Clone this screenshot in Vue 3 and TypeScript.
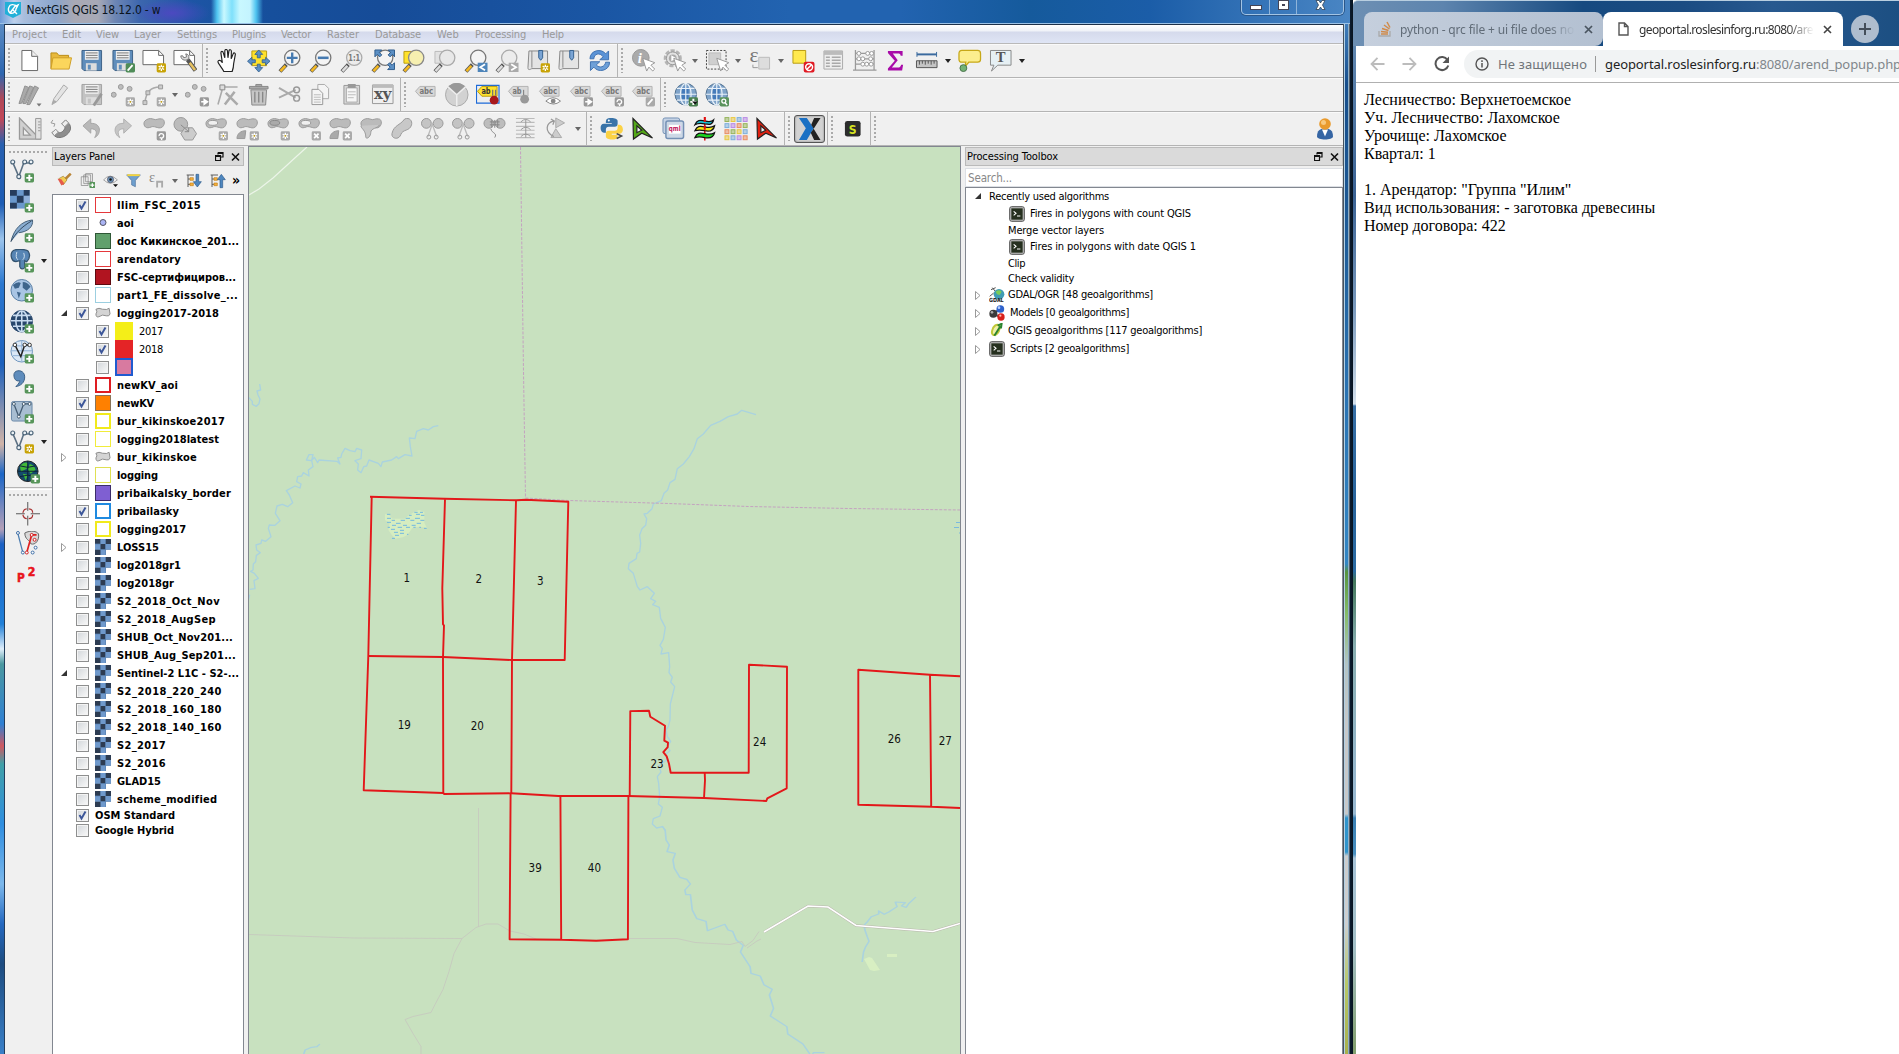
<script setup lang="ts">
interface Item { icon?: string; arrow?: 'on' | 'off' }
interface Layer { name: string; w: number; sym: string; on?: boolean; exp?: 'open' | 'closed'; sub?: boolean; short?: boolean; noSym?: boolean }

const vFit = {
  mounted(el: HTMLElement, binding: { value: number }) {
    const natural = el.getBoundingClientRect().width
    const count = (el.textContent || '').trim().length
    if (count && binding.value) el.style.letterSpacing = (binding.value - natural) / count + 'px'
  },
}

const badge = (fill: string, inner: string) => `<rect x="15" y="14.500" width="9.500" height="9.500" rx="1.500" fill="${fill}"/>${inner}`
const star = '<path d="M19.750 16v6.500M17 17.500l5.500 3.500M17 21l5.500-3.500" stroke="#fff" stroke-width="1.300"/><circle cx="19.750" cy="19.250" r="1" fill="#b8940a"/>'
const plus = '<path d="M19.750 16.200v6.200M16.600 19.250h6.200" stroke="#fff" stroke-width="2"/>'
const cross = '<path d="M17.500 17l4.500 4.500M22 17l-4.500 4.500" stroke="#fff" stroke-width="1.800"/>'
const right = '<path d="M16.500 19.200h3v-2.400l3.600 2.400-3.600 2.600v-2.600" stroke="#fff" stroke-width="1.400" fill="#fff"/>'
const rot = '<path d="M17.500 19.500a2.300 2.300 0 1 1 2.500 2v2M20 21.500l-2-.5" stroke="#fff" stroke-width="1.400" fill="none"/>'
const pen = '<path d="M17 22l5-5.500" stroke="#fff" stroke-width="1.800"/>'
const goldStar = badge('#c8a306', star)
const grayStar = badge('#aaa', star)
const greenPlus = badge('#57955a', plus)
const lens = (rim: string, glass: string, handle: string) =>
  `<path d="M2 23L8.500 16" stroke="#555" stroke-width="4"/><path d="M2.500 22.500L7.500 17.200" stroke="${handle}" stroke-width="2.600"/><circle cx="14.500" cy="9" r="7.800" fill="${glass}" stroke="${rim}" stroke-width="1.300"/>`
const yl = lens('#777', '#f4f4f4', '#f5b921')
const gl = lens('#aaa', '#ececec', '#ddd')
const blob = 'M3 4C1 6 2 11 6 11c3 0 4-2 7-1 4 1 5 2 8 0 3-3 2-8-1-8-4-1-5 2-9 0C8 1 5 2 3 4Z'
const gb = (extra = '') => `<path d="${blob}" fill="#bbb" stroke="#9b9b9b"/>${extra}`
const tag = (t: string, bg = '#d9d9d9', st = '#b2b2b2', fg = '#777') =>
  `<path d="M1.500 8.500L6 3.500h15.500v10H6Z" fill="${bg}" stroke="${st}"/><text x="5.500" y="11.500" font-size="8.500" font-weight="700" font-family="DejaVu Sans" textLength="${t.length * 4.7}" lengthAdjust="spacingAndGlyphs" fill="${fg}">${t}</text>`
const floppy = (c: string, e: string) =>
  `<path d="M2 1.500h20v20.500H4L2 20Z" fill="${c}" stroke="${e}"/><path d="M5 2h14v9H5z" fill="#f2f2f2"/><path d="M6 4h12M6 6.500h12M6 9h12" stroke="#777"/><path d="M6 14.500h11V22H6z" fill="#ddd"/><path d="M8 16h3v5H8z" fill="${c}"/>`
const cut = '<path d="M12 6l-5 14M11 6l5 14" stroke="#bbb" stroke-width="1.400"/><circle cx="8" cy="20.500" r="2" fill="none" stroke="#999"/><circle cx="15.500" cy="20.500" r="2" fill="none" stroke="#999"/>'
const globe = '<circle cx="12" cy="11.500" r="11" fill="#7fa3c9" stroke="#50708e"/><path d="M8 4h7v13H8z" fill="#2c6ab4" opacity=".7"/><path d="M12 .5v22M1 11.500h22M3 5.500h18M3 17.500h18" stroke="#eaf2fa" stroke-width="1.200"/><ellipse cx="12" cy="11.500" rx="5.500" ry="11" fill="none" stroke="#eaf2fa" stroke-width="1.200"/>'
const vline = '<path d="M3 4l6 14L14 4h7" fill="none" stroke="#5c7184" stroke-width="1.600"/><g fill="#eef4f8" stroke="#4b6478" stroke-width="1.200"><circle cx="2.800" cy="3" r="2"/><circle cx="9" cy="18" r="2"/><circle cx="15" cy="3" r="2"/><circle cx="21.500" cy="3" r="2"/></g>'
const dots = '<g fill="#bdbdbd" stroke="#999"><circle cx="2.800" cy="12" r="2.500"/><circle cx="10" cy="4" r="2.500"/><circle cx="19" cy="6" r="2.500"/></g>'
const cursor = '<path d="M12 9.500l4 13 2.300-4 3.900 4 2-2-3.900-4 4-2.500Z" fill="#fff" stroke="#999"/>'
const north = (c: string) => `<path d="M2 1.500L22 21.500l-11-5-8.500 6ZM6 9v7l5-2.500Z" fill="${c}" fill-rule="evenodd" stroke="#222" stroke-width="1.200"/>`
const grid = ['#96b45a', '#e8c840', '#7caedb', '#b98ae6', '#ea8c60']
const cells = Array.from({ length: 16 }, (_, i) => {
  const c = grid[((i % 4) + Math.floor(i / 4) * 2) % 5]
  return `<rect x="${1 + (i % 4) * 6.200}" y="${0.6 + Math.floor(i / 4) * 6.200}" width="4" height="4" fill="${c}" fill-opacity=".5" stroke="${c}"/>`
}).join('')

const icons: Record<string, string> = {
  new: '<path d="M4 1.500h10l6 6V22H4Z" fill="#fff" stroke="#666"/><path d="M14 1.500v6h6" fill="#eee" stroke="#666"/>',
  open: '<path d="M2 20V4h6l2 2.500h10V9" fill="#e8b93c" stroke="#b98c18"/><path d="M2 20.500L4 9h19l-2.500 11.500Z" fill="#fbd65c" stroke="#cf9f27"/>',
  save: floppy('#5f8dbb', '#3d6288'),
  saveas: floppy('#5f8dbb', '#3d6288') + badge('#4f8c58', pen),
  composer: '<path d="M1 1.500h16l5 5V16H1Z" fill="#fff" stroke="#666"/><path d="M17 1.500v5h5" fill="none" stroke="#666"/>' + goldStar,
  manager: '<path d="M1 1.500h16l5 5V16H1Z" fill="#fff" stroke="#666"/><path d="M17 1.500v5h5" fill="none" stroke="#666"/><path d="M8 7c0 4 4 5 6 4l2-1c1-3-1-5-3-5l1 3-3 1-1-2Z" fill="#ddd" stroke="#777"/><path d="M15 11l8 11" stroke="#555" stroke-width="4.500"/><path d="M17 14l5.500 7.500" stroke="#e6c160" stroke-width="2.600"/>',
  pan: '<path d="M8 23c-1-3-6-8-6-10s3-2 4.500 1L5 4c0-2 2-2 2.500 0L9 9V2c0-2 2.500-2 2.700 0l.5 7 1-7c.3-2 2.500-1.500 2.500.3L15.500 10l2-5c.7-1.700 2.500-1 2.200.8L18 15c0 3-.5 5-1.500 8Z" fill="#fff" stroke="#222" stroke-width="1.200"/>',
  pansel: '<path d="M5 2h15v15H5z" fill="#ffe22b" stroke="#b99c10"/><g fill="#5b8fc4" stroke="#2f5c8c" stroke-width=".8"><path d="M12 1l4 4.500h-2.500V9h-3V5.500H8ZM12 23.500l4-4.500h-2.500v-3.500h-3V19H8ZM.500 12.500L5 8.500V11h3.500v3H5v2.500ZM23.500 12.500L19 8.500V11h-3.500v3H19v2.500Z"/></g>',
  zin: yl + '<path d="M14.500 3.500v11M9 9h11" stroke="#467ab0" stroke-width="2.400"/>',
  zout: yl + '<path d="M9 9h11" stroke="#467ab0" stroke-width="2.600"/>',
  z11: gl + '<text x="8.500" y="12.500" font-size="9" font-weight="700" font-family="DejaVu Sans" textLength="12" lengthAdjust="spacingAndGlyphs" fill="#777">1:1</text>',
  zfull: yl + '<g fill="#5b8fc4" stroke="#2f5c8c"><path d="M4 1h7L8.500 3.500 11 6 9 8 6.500 5.500 4 8ZM24 1h-6.500L20 3.500 17.500 6l2 2L22 5.500 24 8ZM24 21h-7l2.500-2.500L17 16l2-2 2.500 2.500L24 14Z"/></g>',
  zsel: '<path d="M2 2.500h14v12H2z" fill="#ffe22b" stroke="#b99c10"/>' + lens('#888', '#f6efb0', '#f5b921'),
  zlayer: '<path d="M2 2.500h11v12H2z" fill="#e2e2e2" stroke="#bbb"/>' + lens('#aaa', '#e8e8e8', '#ddd'),
  zlast: yl + '<path d="M14 14h10v9.500H14z" fill="#4e85ba"/><path d="M21.500 15.500L16.500 18.700l5 3" stroke="#fff" stroke-width="1.800" fill="none"/>',
  znext: gl + '<path d="M14 14h10v9.500H14z" fill="#aaa"/><path d="M16.500 15.500l5 3.200-5 3" stroke="#fff" stroke-width="1.800" fill="none"/>',
  bmnew: '<path d="M3 2h19v18H6c-2 1-4 2-4-1Z" fill="#e4e4e4" stroke="#888"/><path d="M6 2v17" stroke="#888"/><path d="M13 1.500h4V9l-2 2.500L13 9Z" fill="#7aa4d4" stroke="#33608e"/>' + goldStar,
  bm: '<path d="M3 2h19v18H6c-2 1-4 2-4-1Z" fill="#e4e4e4" stroke="#888"/><path d="M6 2v17" stroke="#888"/><path d="M13 1.500h4V9l-2 2.500L13 9Z" fill="#7aa4d4" stroke="#33608e"/>',
  refresh: '<path d="M2 10C2 1 14-1 18 5l3-3v9h-9l3.500-3C12 3 6 5 6 10Z" fill="#5b93d6" stroke="#3f72b0"/><path d="M22 13.500c0 9-12 11-16 5L2.500 22v-9h9.500l-3.500 3.200c3 4 9 2 9.500-2.700Z" fill="#6ea0d8" stroke="#3f72b0"/>',
  info: '<circle cx="10" cy="9" r="8.500" fill="#aaa" stroke="#999"/><text x="7" y="14.500" font-size="15" font-style="italic" font-weight="700" font-family="Liberation Serif" fill="#fff">i</text>' + cursor,
  action: '<circle cx="11" cy="9.500" r="7.500" fill="#ddd" stroke="#b4b4b4" stroke-width="3.500" stroke-dasharray="4 1.500"/><circle cx="11" cy="9.500" r="6.500" fill="#e2e2e2" stroke="#999"/><circle cx="11" cy="9.500" r="4" fill="#aaa"/><path d="M9.500 6.500l5 3-5 3Z" fill="#fff"/>' + cursor,
  select: '<path d="M4 4h12v12H4z" fill="#cfcfcf" stroke="#bbb"/><path d="M1.500 1.500h20v19h-20z" fill="none" stroke="#444" stroke-dasharray="2 1.500"/>' + cursor,
  expr: '<path d="M11 8.500h11v12H11z" fill="#ddd" stroke="#bbb"/><text x="1.500" y="13.500" font-size="22" font-family="Liberation Serif" fill="#777">ε</text><path d="M5 16v3h5" stroke="#999" fill="none"/>',
  desel: '<path d="M2 1.500h13v13H2z" fill="#ffe94e" stroke="#b99c10"/><rect x="13" y="13" width="11" height="11" rx="2" fill="#e01b24"/><circle cx="18.500" cy="18.500" r="3.500" fill="none" stroke="#fff" stroke-width="1.500"/><path d="M16 21l5-5" stroke="#fff" stroke-width="1.500"/>',
  table: '<path d="M2 2h19v18.500H2z" fill="#eee" stroke="#aaa"/><path d="M2 2h19v4H2z" fill="#bbb"/><path d="M4 8.500h4M10 8.500h9M4 11.500h4M10 11.500h9M4 14.500h4M10 14.500h9M4 17.500h4M10 17.500h9" stroke="#aaa" stroke-width="1.500"/>',
  calc: '<path d="M2.500 1v20M21.500 1v20M0 21.500h24M2.500 4.500h19M2.500 10h19M2.500 15.500h19" stroke="#999" stroke-width="1.300"/><g fill="#fff" stroke="#999"><circle cx="6" cy="4.500" r="2"/><circle cx="15" cy="4.500" r="2"/><circle cx="19" cy="4.500" r="2"/><circle cx="6" cy="10" r="2"/><circle cx="10" cy="10" r="2"/><circle cx="18" cy="10" r="2"/><circle cx="10" cy="15.500" r="2"/><circle cx="14" cy="15.500" r="2"/><circle cx="18.500" cy="15.500" r="2"/></g>',
  sigma: '<path d="M4 2h15v5h-2c0-2-1-2.500-3-2.500H9l5 7-6 7.500h6c2 0 3-1 3.500-3h2L18.500 22H4v-2l7-8L4 4Z" fill="#a80ca8"/>',
  measure: '<path d="M2 5.500h20" stroke="#3b6a9e" stroke-width="2"/><path d="M2 3v5M22 3v5" stroke="#3b6a9e"/><path d="M1.500 12h21v7h-21z" fill="#c4c4c4" stroke="#555"/><path d="M4.500 12v4M7.500 12v3M10.500 12v4M13.500 12v3M16.500 12v4M19.500 12v3" stroke="#555"/>',
  tip: '<path d="M4 1.500h16q3 0 3 3v6q0 3-3 3H11L7 18l1-4.500H4q-3 0-3-3v-6q0-3 3-3Z" fill="#fcee8e" stroke="#c7a818" stroke-width="1.300"/><circle cx="5.500" cy="19.500" r="3.500" fill="#74b274" stroke="#47724a"/>',
  text: '<path d="M1.500 1.500h21v15H9l-6.500 6L5 16.500H1.500Z" fill="#e6f0f4" stroke="#888"/><text x="7" y="13.500" font-size="15" font-weight="700" font-family="Liberation Serif" fill="#555">T</text>',
  pencils: '<g stroke="#909090" fill="#aaa"><path d="M1 21L7 3l4 1.500-7 16ZM5 21l7-18 4 1.500L8 21ZM9 22l8-19 4 2-9 17Z"/></g><path d="M19 21h5l-2.500 3Z" fill="#777"/>',
  pencil: '<path d="M3 22l2-6L15 2l4 3L8 19Z" fill="#e4e4e4" stroke="#aaa"/><path d="M3 22l1.500-5 3.500 2Z" fill="#aaa"/>',
  gsave: floppy('#c3c3c3', '#a3a3a3') + '<path d="M14 23l8-12" stroke="#999" stroke-width="3"/>',
  addpt: dots + grayStar,
  curve: '<path d="M3 20C4 9 9 4 18 4" fill="none" stroke="#aaa" stroke-width="1.600"/><g fill="#ccc" stroke="#999"><path d="M1 18h4v4H1zM4 8h4v4H4zM17 2h4v4h-4z"/></g>' + grayStar,
  movept: dots + badge('#999', right),
  node: '<path d="M6 4v4L2 22M8 4h14" stroke="#aaa" stroke-width="1.600" fill="none"/><path d="M4 2h5v5H4z" fill="#ddd" stroke="#888"/><path d="M9 22L19 9M10 10l12 12" stroke="#aaa" stroke-width="2.600"/>',
  trash: '<path d="M4 7h16l-1 15.500H5Z" fill="#c6c6c6" stroke="#888"/><path d="M8 9v11M12 9v11M16 9v11" stroke="#888" stroke-width="1.400"/><path d="M2.500 3.500h19v2.500h-19zM9 3.500V1.500h6v2" fill="#aaa" stroke="#888"/>',
  scissors: '<path d="M1 5l17 10M1 15l17-8" stroke="#aaa" stroke-width="2"/><circle cx="19" cy="7" r="3" fill="none" stroke="#999" stroke-width="1.500"/><circle cx="19" cy="15.500" r="3" fill="none" stroke="#999" stroke-width="1.500"/>',
  copy: '<path d="M9 1.500h7l4 4V16H9Z" fill="#f4f4f4" stroke="#aaa"/><path d="M3 6.500h7l4 4V22H3Z" fill="#f4f4f4" stroke="#999"/><path d="M5 12h7M5 14.500h7M5 17h7M5 19.500h7" stroke="#bbb"/>',
  paste: '<path d="M4 2.500h16v19H4z" fill="#d8d8d8" stroke="#999"/><path d="M6.500 5h11v14.500h-11z" fill="#f6f6f6" stroke="#aaa"/><path d="M8 1h8v4H8z" fill="#999"/><path d="M8 9h8M8 12h8M8 15h6" stroke="#bbb"/>',
  xy: '<path d="M1.500 2h21v19h-21z" fill="#efefef" stroke="#999"/><path d="M1.500 2h21v3h-21z" fill="#bbb"/><text x="3" y="16.500" font-size="15" font-weight="700" font-family="DejaVu Serif" textLength="18" lengthAdjust="spacingAndGlyphs" fill="#555">xy</text>',
  abc: tag('abc'),
  pie: '<circle cx="12" cy="12" r="11.500" fill="#d2d2d2" stroke="#aaa"/><path d="M12 12L3 4A12 12 0 0 1 21 4Z" fill="#999"/><path d="M12 12L3 4M12 12l9-8M12 12v11.500" stroke="#eee" stroke-width="1.500"/>',
  pin: '<path d="M.500 2.500h23v18H.5z" fill="#eee" stroke="#1c6ad8" stroke-width="1.200"/>' + tag('ab', '#ffe22b', '#b99c10', '#333') + '<path d="M17 7v6M20 7v6" stroke="#777" stroke-width="1.300"/><circle cx="18.500" cy="17.500" r="4.500" fill="#a8181c"/>',
  gpin: tag('ab') + '<path d="M17 7v6" stroke="#777"/><circle cx="18" cy="16.500" r="4.500" fill="#999"/>',
  eye: tag('abc') + '<path d="M8 18.500q7-7 15 0q-7 6-15 0Z" fill="#fff" stroke="#888"/><circle cx="15.500" cy="18.500" r="2.500" fill="#888"/>',
  amove: tag('abc') + badge('#999', right),
  arot: tag('abc') + badge('#999', rot),
  aedit: tag('abc') + badge('#aaa', pen),
  globeadd: globe + badge('#4a8050', plus) + '<path d="M18.500 19h6l-3 3Z" fill="#111"/>',
  globesearch: globe + badge('#5a935c', '<circle cx="19.200" cy="18.500" r="2" fill="none" stroke="#fff" stroke-width="1.300"/><path d="M20.500 20l2 2.500" stroke="#fff" stroke-width="1.500"/>'),
  ruler: '<path d="M1.500 1v21.500h21Z M5.500 11v7.500h7Z" fill="#d0d0d0" fill-rule="evenodd" stroke="#999" stroke-width="1.300"/><path d="M18 1.500h5.500v21H18z" fill="#e2e2e2" stroke="#999"/><path d="M20.500 5H23M20.500 8H23M20.500 11H23M20.500 14H23" stroke="#999"/>',
  magnet: '<path d="M17 3l4 4.500c4 6-4 14-11 13.500-3 0-5-2-7-5l4-3c3 5 7 3 9-1 1-2-1-3-3-5Z" fill="#8e8e8e" stroke="#777"/><path d="M13 7l4-4 3 3-4 4ZM3 16l4-3.500 2.500 3-4 3.500Z" fill="#eee" stroke="#999"/><path d="M4 3l-2 3 4 1-1 3" stroke="#999" fill="none"/>',
  undo: '<path d="M3 9l8-7v4.500c11-.5 11 11 4 14.500 3-5 2-9-4-9v4.500Z" fill="#b8b8b8" stroke="#a5a5a5"/>',
  redo: '<path d="M21 9l-8-7v4.500C2 6 2 17.500 9 21c-3-5-2-9 4-9v4.500Z" fill="#c6c6c6" stroke="#b0b0b0"/>',
  frot: gb(badge('#999', rot)),
  simp: '<circle cx="8" cy="7.500" r="7" fill="#bbb" stroke="#999"/><path d="M12 11h8l4 6-4 6.500h-8L8 17Z" fill="#ccc" stroke="#999"/><path d="M8 8l8 7M16 11v4h-4" stroke="#888" fill="none"/>',
  ring: gb('<ellipse cx="9" cy="6" rx="5" ry="2.500" fill="#f0f0f0" stroke="#999"/>' + grayStar),
  part: gb('<path d="M2 22c0-5 4-8 9-8l-1 8Z" fill="#aaa" stroke="#999"/>' + grayStar),
  fring: gb('<ellipse cx="9" cy="6" rx="5" ry="2.500" fill="#aaa" stroke="#888"/>' + grayStar),
  dring: gb('<ellipse cx="9" cy="6" rx="5" ry="2.500" fill="#f0f0f0" stroke="#999"/>' + badge('#aaa', cross)),
  dpart: gb('<path d="M2 22c0-5 4-8 9-8l-1 8Z" fill="#aaa" stroke="#999"/>' + badge('#aaa', cross)),
  reshape: gb('<path d="M2 9c0 3 5 4 5 12 2 2 5-2 5-5 0-5 7-4 9-8" fill="#c8c8c8" stroke="#999"/>'),
  offset: '<path d="M15 2c5-2 8 2 7 6-2 7-9 4-11 10-2 6-10 4-9-1C4 8 10 9 15 2Z" fill="#c8c8c8" stroke="#999"/>',
  split: '<circle cx="5.500" cy="6.500" r="5" fill="#c4c4c4" stroke="#999"/><circle cx="17.500" cy="6.500" r="5" fill="#c4c4c4" stroke="#999"/>' + cut,
  merge: '<circle cx="6" cy="6.500" r="5" fill="#bdbdbd" stroke="#999"/><circle cx="17.500" cy="6.500" r="5" fill="#bdbdbd" stroke="#999"/><path d="M7 5h10M7 8h10M9 3v8M12 3v8M15 3v8M8 12c1 5 7 4 4 9" stroke="#888" fill="none"/>',
  mattr: '<path d="M2 1.500h19M2 5.500h19M2 9.500h19M2 13.500h19M2 17.500h19M2 21h19" stroke="#bbb" stroke-width="1.200"/><path d="M7 5q5-5 10 0M7 13q5-5 10 0M7 20q5-5 10 0M12 3v18" stroke="#999" fill="none"/>',
  rsym: '<path d="M11 1l9 5-9 5ZM11 12l6 9H6Z" fill="#ccc" stroke="#aaa"/><path d="M9 20C-1 15 1 6 9 4M6 2l3.500 2-1.500 4" fill="none" stroke="#999" stroke-width="1.300"/>',
  python: '<path d="M12 1C6 1 6 3 6 6h6v1H4c-5 0-4 9 0 9h2v-3q0-3 3-3h6q3 0 3-3V4c0-2-3-3-6-3Z" fill="#3973a8"/><path d="M12 23c6 0 6-2 6-5h-6v-1h8c5 0 4-9 0-9h-2v3q0 3-3 3H9q-3 0-3 3v3c0 2 3 3 6 3Z" fill="#fbd245"/><circle cx="9" cy="3.500" r="1" fill="#fff"/><path d="M17 17l5 2.500-5 2.500" fill="none" stroke="#444" stroke-width="1.600"/>',
  ngreen: north('#54a818'),
  nred: north('#e02010'),
  qml: '<rect x="1" y="1" width="17" height="16" rx="2" fill="#c5d2e4" stroke="#7490b4"/><rect x="4" y="4" width="18" height="18" rx="2" fill="#cdd8e6" stroke="#7490b4" stroke-width="1.500"/><rect x="7" y="8" width="12" height="9" fill="#fff"/><text x="7" y="14.500" font-size="7.500" font-weight="700" font-family="DejaVu Sans" textLength="12" lengthAdjust="spacingAndGlyphs" fill="#c22060">qml</text>',
  stack: '<path d="M12 0v24" stroke="#e01010" stroke-width="1.600"/><g stroke="#111" stroke-width="1.300"><path d="M2 21c2-5 5-5 10-4 4 1 7 1 10-1-1 5-5 6-10 5-4-1-7-1-10 0Z" fill="#1ed41e"/><path d="M2 14c2-5 5-5 10-4 4 1 7 1 10-1-1 5-5 6-10 5-4-1-7-1-10 0Z" fill="#f4e816"/><path d="M2 8c2-5 5-5 10-4 4 1 7 1 9-1-1 5-4 5-9 4-4-1-7-1-10 1Z" fill="#1cc0d4"/></g><path d="M12 0v5M12 9v4" stroke="#e01010" stroke-width="2"/>',
  cells,
  xbtn: '<path d="M1 1h8l7 10.500L9 23.500H1l7-12Z" fill="#1a70c4"/><path d="M13.500 8l3-7h6.500l-7 11ZM13 16l3.500 7.500H23L16 12Z" fill="#222"/>',
  sbtn: '<rect x="4" y="4" width="16" height="16" rx="2.500" fill="#2c2c2c"/><text x="8" y="17" font-size="13" font-weight="700" font-family="DejaVu Sans Condensed" fill="#d6e420" textLength="8" lengthAdjust="spacingAndGlyphs">S</text>',
  user: '<path d="M4 19c0-6 3-8 8-8s8 2 8 8c0 4-16 4-16 0Z" fill="#3565a4"/><path d="M9 12l3 7 3-7Z" fill="#fff"/><circle cx="12" cy="6.500" r="5.800" fill="#e99a2c"/><circle cx="10.500" cy="5" r="2.500" fill="#f8c87c"/>',
  lvector: vline + greenPlus,
  lraster: '<path d="M0 1h20v19H0z" fill="#6a98cc"/><path d="M0 1h7v6H0zM14 1h6v6h-6zM7 7h7v7H7zM0 14h7v6H0z" fill="#263c5c"/><path d="M14 7h6v7h-6z" fill="#8fb0da"/>' + greenPlus,
  lfeather: '<path d="M1 23C4 10 12 2 23 1c1 7-5 12-14 13" fill="#89acd0" stroke="#445f78"/><path d="M1 23C6 14 12 8 22 2" stroke="#33495e" fill="none"/>' + greenPlus,
  lpg: '<path d="M2 3c2-4 16-3 17 0 2 4 0 8-2 10l-2-1v7c-2 2-4 2-5-1V12l-4 1C2 13 0 7 2 3Z" fill="#5785b4" stroke="#33536f" stroke-width="1.300"/><path d="M7 3c-1 4-1 6 1 8M14 4c1 3 1 5-1 7" stroke="#cfe0ee" fill="none"/>' + greenPlus,
  lglobe1: '<circle cx="12" cy="11.500" r="11" fill="#a9c5e4" stroke="#5a7fa4"/><path d="M3 6q5-4 8-2l-2 5-4 1ZM13 3q5 0 8 5l-4 4-4-3ZM7 13l4 1-2 6Z" fill="#3e658c"/>' + greenPlus,
  lglobe2: '<circle cx="12" cy="11.500" r="11" fill="#28476c" stroke="#28476c"/><path d="M12 1v21M1 11h22M3 5.500h18M3 16.500h18" stroke="#c9dcf0" stroke-width="1.600"/><ellipse cx="12" cy="11.500" rx="6" ry="10.500" fill="none" stroke="#c9dcf0" stroke-width="1.600"/>' + greenPlus,
  lwfs: '<circle cx="12" cy="11.500" r="11" fill="#dbe8f6" stroke="#6f94bc"/><path d="M1 11h22M12 1v21M3 6h18M3 16h18" stroke="#8fb0d4"/><path d="M5 5l6 12 4-12h5" fill="none" stroke="#222" stroke-width="1.500"/><g fill="#fff" stroke="#333"><circle cx="5" cy="5" r="1.800"/><circle cx="15" cy="5" r="1.800"/><circle cx="20" cy="5" r="1.800"/></g>' + greenPlus,
  lcomma: '<path d="M4 5c0-6 11-6 11 2 0 6-4 9-9 10 3-3 4-5 4-6-4 1-6-2-6-6Z" fill="#5e8cbc" stroke="#3a5f85"/>' + greenPlus,
  lvirt: '<rect x="1.500" y="1.500" width="21" height="20" rx="2" fill="#a8bed2" stroke="#6a89a8"/><path d="M4 4l5 13 5-13h6" fill="none" stroke="#445c72" stroke-width="1.300"/><g fill="#fff" stroke="#445c72"><circle cx="4" cy="4" r="1.500"/><circle cx="9" cy="17" r="1.500"/><circle cx="14" cy="4" r="1.500"/><circle cx="20" cy="4" r="1.500"/></g>' + greenPlus,
  lnew: vline + goldStar,
  lmap: '<circle cx="12" cy="11.500" r="10.500" fill="#144a6c" stroke="#222"/><path d="M4 6q5-5 8-3l-1 6-6 3ZM14 4q5 1 6 6l-5 4-3-4ZM7 14l5 1-2 6Z" fill="#42b838"/><path d="M12 1v21M2 11.500h20M4 6q8 3 16 0M4 17q8-3 16 0" stroke="#0c2236" fill="none"/>' + greenPlus,
  crossh: '<path d="M12 0v9M12 14v10M0 12h9M15 12h10" stroke="#555"/><path d="M7 11q1-4 4-4M13 7q4 0 4 4M7 13q1 4 4 4M13 17q4 0 4-4" stroke="#a83434" fill="none" stroke-width="1.200"/>',
  nodes2: '<path d="M2 3l5 19" stroke="#4a7cb0" stroke-width="1.300"/><path d="M9 2c6-3 12-2 14 1 1 6-3 12-8 10-1-4-6-4-6-11Z" fill="#d8d8d8" stroke="#666"/><path d="M11 22l5-18h5" stroke="#e02020" stroke-width="1.700" fill="none"/><g fill="#fff" stroke="#3b6ca4"><circle cx="2" cy="2" r="1.500"/><circle cx="7" cy="22" r="1.500"/><circle cx="17" cy="22" r="1.500"/><circle cx="20" cy="17" r="1.500"/></g><g fill="#fff" stroke="#d02020"><circle cx="11" cy="22" r="1.500"/><circle cx="16" cy="4" r="1.500"/><circle cx="19" cy="9" r="1.500"/></g>',
  p2: '<text x="1" y="22.500" font-size="12" font-weight="700" font-family="DejaVu Sans Condensed" fill="#e8141c" stroke="#e8141c" stroke-width=".5">P</text><text x="12" y="16.500" font-size="12.500" font-weight="700" font-family="DejaVu Sans Condensed" fill="#e8141c" stroke="#e8141c" stroke-width=".5">2</text>',
  brush: '<path d="M13 10L22 1" stroke="#b98436" stroke-width="4"/><path d="M3 9l7-4 6 6-6 8Z" fill="#f2cc54" stroke="#9c7c28"/><path d="M1 9l6 1 5 7-5 3Z" fill="#e55a4c"/>',
  group: '<path d="M2 6h11v14H2zM6 3h11v14H6zM9 1h11v13H9z" fill="#f0f0f0" stroke="#777"/>' + greenPlus,
  show: '<path d="M1 11q10-12 22 0q-11 11-22 0Z" fill="#f4f4f4" stroke="#777"/><circle cx="12" cy="10.500" r="5" fill="#6d93b8" stroke="#445"/><circle cx="12" cy="10.500" r="2" fill="#111"/><path d="M16 18h8l-4 4.500Z" fill="#111"/>',
  funnel: '<path d="M1 3h22l-8 9v10l-6-3v-7Z" fill="#6fa0cf" stroke="#466c96"/><path d="M2 2h20v3H2z" fill="#f5d53c"/>',
  eps: '<text x="0" y="15" font-size="23" font-family="Liberation Serif" fill="#888">ε</text><path d="M13 23v-9h8v9" stroke="#aaa" stroke-width="3" fill="none"/>',
  expand: '<path d="M1 3h11M3 3v18M3 9h6M3 17h6" stroke="#555" stroke-width="1.400" fill="none"/><path d="M6 7h5v4H6zM6 15h5v4H6z" fill="#f6b13c" stroke="#c58219"/><path d="M15 2h4v11h4l-6 8-6-8h4Z" fill="#4f87bf" stroke="#2f5c8c"/>',
  collapse: '<path d="M1 3h11M3 3v18M3 9h6M3 17h6" stroke="#555" stroke-width="1.400" fill="none"/><path d="M6 7h5v4H6zM6 15h5v4H6z" fill="#f6b13c" stroke="#c58219"/><path d="M15 22h4V10h4l-6-8-6 8h4Z" fill="#4f87bf" stroke="#2f5c8c"/>',
  script: '<rect x="1" y="1" width="22" height="22" rx="3" fill="#bbb" stroke="#555" stroke-width="1.500"/><rect x="3.500" y="3.500" width="17" height="17" fill="#26301f"/><path d="M7 8l3.500 3L7 14M12 15h5" fill="none" stroke="#fff" stroke-width="1.700"/>',
  gdal: '<circle cx="15" cy="11" r="8" fill="#3f9cb4"/><path d="M10 7q5-4 9 0l-3 5-4-1Z" fill="#7ccc58"/><path d="M3 4l7-3M5 1l4 5M1 14l6-5" stroke="#555" stroke-width="1.500"/><text x="0" y="22" font-size="8.500" font-weight="700" font-family="DejaVu Sans" textLength="22" lengthAdjust="spacingAndGlyphs" fill="#222">GDAL</text>',
  models: '<path d="M7 12l11-6M7 13l11 6" stroke="#555" stroke-width="3"/><circle cx="6.500" cy="13" r="6" fill="#3b3b3b"/><circle cx="4.500" cy="11" r="2" fill="#aaa"/><circle cx="17" cy="6" r="5.800" fill="#2e62cc"/><circle cx="15" cy="4" r="2" fill="#b8d0ff"/><circle cx="18" cy="18" r="5.500" fill="#d8201c"/><circle cx="17" cy="16" r="1.700" fill="#ffb8b0"/>',
  qgis: '<path d="M9 4c4-3 8-1 7 4-1 6-5 11-9 10-5-1-2-11 2-14Z" fill="#eef0a8" stroke="#c2c83a" stroke-width="3"/><path d="M8 19L17 5M13 4l6-3-1 7" stroke="#2a8430" stroke-width="2.800" fill="none"/>',
}

const I = (s: string): Item[] => s.split(' ').map((k) => (k === '>' ? { arrow: 'on' } : k === '<' ? { arrow: 'off' } : { icon: k }))
const toolbars: Item[][][] = [
  [I('new open save saveas composer manager'), I('pan pansel zin zout z11 zfull zsel zlayer zlast znext bmnew bm refresh'), I('info action < select < expr < desel table calc sigma measure > tip text >')],
  [I('pencils pencil gsave addpt curve < movept node trash scissors copy paste xy'), I('abc pie pin gpin eye amove arot aedit'), I('globeadd globesearch')],
  [I('ruler magnet undo redo frot simp ring part fring dring dpart reshape offset split split merge mattr rsym <'), I('python ngreen qml stack cells nred'), I('xbtn'), I('sbtn'), []],
]
const menus: [string, number, number][] = [
  ['Project', 12, 35], ['Edit', 62, 19], ['View', 96, 23], ['Layer', 134, 27], ['Settings', 177, 40], ['Plugins', 232, 34], ['Vector', 281, 30],
  ['Raster', 327, 32], ['Database', 375, 46], ['Web', 437, 22], ['Processing', 475, 51], ['Help', 542, 22],
]
const menuItems = menus.map((m, i) => ({ name: m[0], w: m[2], gap: i ? m[1] - menus[i - 1][1] - menus[i - 1][2] : m[1] - 5 }))
const side = ['lvector', 'lraster', 'lfeather', 'lpg', 'lglobe1', 'lglobe2', 'lwfs', 'lcomma', 'lvirt', 'lnew', 'lmap']

const o = (c: string) => `background:#fff;border-color:${c}`
const f = (c: string, e = '#444') => `background:${c};border-color:${e}`
const layers: Layer[] = [
  { name: 'Ilim_FSC_2015', w: 84, sym: o('#e5383b'), on: true },
  { name: 'aoi', w: 17, sym: 'dot' },
  { name: 'doc Кикинское_201...', w: 122, sym: f('#61a06c', '#2f5736') },
  { name: 'arendatory', w: 64, sym: o('#e5383b') },
  { name: 'FSC-сертифициров...', w: 119, sym: f('#b11420', '#5e0a10') },
  { name: 'part1_FE_dissolve_...', w: 121, sym: o('#9ccfe0') },
  { name: 'logging2017-2018', w: 102, sym: 'poly', on: true, exp: 'open' },
  { name: '2017', w: 24, sym: f('#f4ee18', '#f4ee18'), on: true, sub: true },
  { name: '2018', w: 24, sym: f('#e42426', '#e42426'), on: true, sub: true },
  { name: '', w: 0, sym: 'background:#d87aa0;border:2px solid #1f5bd0', sub: true },
  { name: 'newKV_aoi', w: 61, sym: o('#df1d22') + ';border-width:2px' },
  { name: 'newKV', w: 37, sym: f('#ff8000', '#8a7458'), on: true },
  { name: 'bur_kikinskoe2017', w: 108, sym: o('#f1ea1c') + ';border-width:2px' },
  { name: 'logging2018latest', w: 102, sym: o('#f1ec3a') },
  { name: 'bur_kikinskoe', w: 80, sym: 'poly', exp: 'closed' },
  { name: 'logging', w: 41, sym: o('#dfe052') },
  { name: 'pribaikalsky_border', w: 114, sym: f('#7f5fd2', '#3b2d6a') },
  { name: 'pribailasky', w: 62, sym: o('#1f8ae0') + ';border-width:2px', on: true },
  { name: 'logging2017', w: 69, sym: o('#f1ea1c') + ';border-width:2px' },
  { name: 'LOSS15', w: 42, sym: 'raster', exp: 'closed' },
  { name: 'log2018gr1', w: 64, sym: 'raster' },
  { name: 'log2018gr', w: 57, sym: 'raster' },
  { name: 'S2_2018_Oct_Nov', w: 103, sym: 'raster' },
  { name: 'S2_2018_AugSep', w: 99, sym: 'raster' },
  { name: 'SHUB_Oct_Nov201...', w: 116, sym: 'raster' },
  { name: 'SHUB_Aug_Sep201...', w: 119, sym: 'raster' },
  { name: 'Sentinel-2 L1C - S2-...', w: 122, sym: 'raster', exp: 'open' },
  { name: 'S2_2018_220_240', w: 105, sym: 'raster' },
  { name: 'S2_2018_160_180', w: 105, sym: 'raster' },
  { name: 'S2_2018_140_160', w: 105, sym: 'raster' },
  { name: 'S2_2017', w: 49, sym: 'raster' },
  { name: 'S2_2016', w: 49, sym: 'raster' },
  { name: 'GLAD15', w: 44, sym: 'raster' },
  { name: 'scheme_modified', w: 100, sym: 'raster' },
  { name: 'OSM Standard', w: 80, sym: '', on: true, short: true, noSym: true },
  { name: 'Google Hybrid', w: 79, sym: '', short: true, noSym: true },
]

const algos = [
  { t: 'Recently used algorithms', w: 120, h: 17, pad: 9, exp: 'open', icon: '' },
  { t: 'Fires in polygons with count QGIS', w: 161, h: 18, pad: 43, exp: '', icon: 'script' },
  { t: 'Merge vector layers', w: 96, h: 15, pad: 42, exp: '', icon: '' },
  { t: 'Fires in polygons with date QGIS 1', w: 166, h: 18, pad: 43, exp: '', icon: 'script' },
  { t: 'Clip', w: 17, h: 15, pad: 42, exp: '', icon: '' },
  { t: 'Check validity', w: 66, h: 15, pad: 42, exp: '', icon: '' },
  { t: 'GDAL/OGR [48 geoalgorithms]', w: 145, h: 18, pad: 9, exp: 'closed', icon: 'gdal' },
  { t: 'Models [0 geoalgorithms]', w: 119, h: 18, pad: 9, exp: 'closed', icon: 'models' },
  { t: 'QGIS geoalgorithms [117 geoalgorithms]', w: 194, h: 18, pad: 9, exp: 'closed', icon: 'qgis' },
  { t: 'Scripts [2 geoalgorithms]', w: 119, h: 18, pad: 9, exp: 'closed', icon: 'script' },
]

const labels: [string, number, number][] = [
  ['1', 406.7, 577.7], ['2', 478.7, 578.3], ['3', 540.3, 580.4], ['19', 404.3, 725], ['20', 477.3, 726], ['23', 657, 763.7],
  ['24', 759.7, 741.7], ['26', 894.3, 739], ['27', 945.3, 741], ['39', 535.2, 867.7], ['40', 594.4, 867.7],
]
const swamp = [[426, 433, 10], [426, 445, 12], [426, 457, 12], [440, 451, 10], [453, 460, 14], [467, 451, 13], [482, 445, 13], [496, 451, 12], [492, 436, 8], [508, 427, 10], [525, 427, 9], [513, 433, 12], [528, 436, 10], [510, 445, 15], [526, 451, 12], [515, 460, 13], [500, 466, 12], [474, 466, 12], [441, 466, 12], [428, 472, 7], [458, 472, 13], [483, 472, 12], [505, 472, 7], [523, 472, 5], [537, 475, 8], [438, 478, 12], [465, 481, 12], [447, 487, 12], [465, 490, 12], [486, 493, 4], [450, 496, 12], [441, 505, 9]]

const westRiver = '580,167 565,170 550,180 535,176 515,184 510,206 493,204 496,230 501,258 480,254 460,266 455,260 440,270 412,276 408,290 400,280 372,270 365,288 356,290 348,308 338,300 340,282 330,272 348,266 350,240 335,235 330,245 315,242 300,235 290,252 288,262 278,264 285,282 276,274 222,270 218,278 208,262 200,272 204,254 192,254 184,270 200,272 204,290 190,300 192,318 175,308 170,318 158,320 155,335 168,342 165,354 150,348 124,362 133,375 143,398 128,410 112,403 96,408 91,430 105,452 90,466 73,465 70,475 78,500 62,514 50,510 48,520 33,525 35,540 46,548 34,556 32,575 25,582 24,600 17,604 28,610 40,625 27,632 30,656 14,658'
const midRiver = '588,44 568,38 545,31 532,42 505,50 480,64 452,76 430,102 412,116 402,146 388,170 370,192 352,206 345,238 330,248 323,270 312,280 304,302 280,312 276,326 262,340 252,342 260,356 257,376 246,386 239,405 242,430 239,456 231,460 229,476 207,490 205,506 220,520 232,560 240,570 262,560 283,580 272,596 287,604 278,614 298,622 302,655 316,682 310,718 300,736 307,746 303,762 326,758 329,800 327,818 337,832 332,846 344,860 331,912 330,960 325,980 318,990 322,1010 332,1024 322,1040 330,1052 318,1062 320,1080 296,1098 303,1116 292,1130 296,1150 299,1190 295,1212 307,1222 300,1248 280,1256 277,1272 290,1284 308,1280 316,1292'
const southRiver = '908,138 915,150 917,180 924,195 919,215 937,220 932,240 935,265 947,292 962,298 970,312 958,330 960,344 970,344 974,390 984,416 1004,424 1007,452 1045,433 1052,450 1062,454 1070,480 1085,496 1079,516 1100,560 1102,580 1122,588 1130,614 1148,628 1142,645 1151,685 1144,708 1180,740 1182,762 1215,792 1230,822'
const pageLines = ['Лесничество: Верхнетоемское', 'Уч. Лесничество: Лахомское', 'Урочище: Лахомское', 'Квартал: 1', '', '1. Арендатор: "Группа "Илим"', 'Вид использования: - заготовка древесины', 'Номер договора: 422']
</script>

<template>
  <div class="screen">
    <div class="qgis">
      <div class="titlebar">
        <svg class="logo" width="16" height="17" viewBox="0 0 16 17"><path d="M0 1h16v12l-8 4-8-4Z" fill="#22b0d8" /><path d="M4 6c1-3 5-3 7-1l2-1-2 4c0 3-3 5-6 4-2-2-2-4-1-6ZM5 12L11 4M8 9l4 4" fill="none" stroke="#fff" stroke-width="1.400" /></svg>
        <span v-fit="134" class="title">NextGIS QGIS 18.12.0 - w</span>
        <div class="winbtns">
          <span class="wb w1"><i class="min"></i></span><span class="wb w2"><i class="max"></i></span>
          <span class="wb w3"><svg width="11" height="10" viewBox="0 0 11 10"><path d="M1 .500h3l1.500 2.500L7 .500h3L7.500 5 10 9.500H7L5.500 7 4 9.500H1L3.500 5Z" fill="#fff" stroke="#345" stroke-width=".8" /></svg></span>
        </div>
      </div>
      <div class="body">
        <div class="edge-left"></div>
        <div class="client">
          <div class="menubar"><span v-for="m in menuItems" :key="m.name" v-fit="m.w" :style="{ marginLeft: m.gap + 'px' }">{{ m.name }}</span></div>
          <div v-for="(row, ri) in toolbars" :key="ri" class="toolrow">
            <div v-for="(g, gi) in row" :key="gi" class="group" :class="{ last: gi === row.length - 1 }">
              <template v-for="(it, ii) in g" :key="ii">
                <span v-if="it.arrow" class="arr" :class="it.arrow"></span>
                <span v-else class="tool" :class="{ pressed: it.icon === 'xbtn' }"><svg width="24" height="24" viewBox="0 0 24.5 24.5" v-html="icons[it.icon!]"></svg></span>
              </template>
            </div>
            <svg v-if="ri === 2" class="user" width="22" height="24" viewBox="1 0 22 23" v-html="icons.user"></svg>
          </div>
          <div class="main">
            <div class="sidebar">
              <div class="hdots"></div>
              <div v-for="s in side" :key="s" class="sideitem" :class="{ inset: s === 'lmap' }"><svg width="24" height="24" viewBox="0 0 24.5 24.5" v-html="icons[s]"></svg><span v-if="s === 'lpg' || s === 'lnew'" class="arr on"></span></div>
              <div class="sidesep"></div>
              <div class="hdots"></div>
              <div v-for="s in ['crossh', 'nodes2', 'p2']" :key="s" class="sideitem b"><svg width="24" height="24" viewBox="0 0 24.5 24.5" v-html="icons[s]"></svg></div>
            </div>
            <div class="layers">
              <div class="dockhead"><span v-fit="61">Layers Panel</span><svg class="dk" width="26" height="10" viewBox="0 0 26 10"><path d="M3 .500h5v4.500H6M3 .500v2M.500 3.500h5v5h-5zM.500 4.500h5M3 1.500h5" fill="none" stroke="#111" stroke-width="1.200" /><path d="M17 1.500l7 7M24 1.500l-7 7" stroke="#111" stroke-width="1.600" /></svg></div>
              <div class="laytools">
                <svg v-for="k in ['brush', 'group', 'show', 'funnel', 'eps']" :key="k" width="15" height="15" viewBox="0 0 24 24" v-html="icons[k]"></svg>
                <span class="arr off"></span>
                <svg v-for="k in ['expand', 'collapse']" :key="k" width="16" height="16" viewBox="0 0 24 24" v-html="icons[k]"></svg>
                <span class="more">»</span>
              </div>
              <div class="tree">
                <div v-for="(l, i) in layers" :key="i" class="lrow" :class="{ sub: l.sub, short: l.short }">
                  <span class="exp"><svg v-if="l.exp === 'open'" width="7" height="7"><path d="M6 0v6H0Z" fill="#333" /></svg><svg v-if="l.exp === 'closed'" width="6" height="9"><path d="M.500 .500v8L5 4.500Z" fill="#fff" stroke="#999" /></svg></span>
                  <span class="check"><svg v-if="l.on" width="11" height="11" viewBox="0 0 11 11"><path d="M2.500 5l2 3.500L8.500 1.500" fill="none" stroke="#3c5699" stroke-width="1.900" /></svg></span>
                  <template v-if="!l.noSym">
                    <svg v-if="l.sym === 'raster'" class="sw" width="16" height="16" viewBox="0 0 16 16"><path d="M0 0h16v10.500H11V16H5V10.500H0Z" fill="#6f99cc" /><path d="M0 0h5.500v5H0zM10.500 0H16v5h-5.500zM5.500 5h5v5.500h-5zM0 10.500h5.500V16H0z" fill="#2d3c52" /><path d="M5.500 0v5H0M10.500 16v-5.500H16M10.500 0v10.500H0" fill="none" stroke="#5a82b2" stroke-width=".7" /></svg>
                    <svg v-else-if="l.sym === 'poly'" class="sw poly" width="16" height="12" viewBox="0 0 17 12"><path d="M1 2q3-2 7 0 5 1 7-1l1 6q-1 3-4 2-4-2-8 1-3 1-3-3 2-2 0-5Z" fill="#d4d4d4" stroke="#888" /></svg>
                    <svg v-else-if="l.sym === 'dot'" class="sw" width="16" height="16"><circle cx="8" cy="7.500" r="3" fill="#aab4f4" stroke="#556" /></svg>
                    <i v-else class="sw sq" :style="l.sym"></i>
                  </template>
                  <span v-fit="l.w" class="lname">{{ l.name }}</span>
                </div>
              </div>
            </div>
            <div class="mapframe">
              <svg class="map" width="711" height="908" viewBox="249 147 711 908" preserveAspectRatio="none">
                <rect x="249" y="147" width="711" height="908" fill="#c8e1bf" />
                <g fill="none" stroke="#aad3df" stroke-linejoin="round">
                  <g transform="translate(245 370) scale(.33333)" stroke-width="4">
                    <path d="M44 42l3 18-11 3 3 12 6 12-3 14-8 8-12-6 0-9-11-12M14 674l-3 14" />
                    <polyline :points="westRiver" />
                  </g>
                  <polyline transform="translate(560 400) scale(.33333)" stroke-width="4" :points="midRiver" />
                  <g transform="translate(245 780) scale(.4592 .33333)" stroke-width="3.600">
                    <polyline :points="southRiver" />
                    <path d="M1236 822l2-4h24M1461 351l-15 19-6 12-10-4 8-10-22-2 4 14-18 16-10 7-12-10 0 9-16 8-8 14-8 12 2 14 5 20 4 14-8 18-4 14-3 30M128 822l3-12 14-8 12-2 6-8" />
                  </g>
                </g>
                <g fill="none" stroke="#c6c9be" stroke-width=".9">
                  <path d="M478.500 808v119M249 934.500l60 2 45 1.500 108 .500 14-11 10-3.500h12l12 7 14 3 12 5M462 938.500l-8 15-5 18-6 18-8 15-4 8-18 4-8 3 8 14 8 13v13M628 938.500h49l18 4 35 2 12-3 3 5 8-6 6-9M747 948l10-7 4-2" />
                </g>
                <path d="M764 932l44-26 20 1 28 18.500 77 6 27-8" fill="none" stroke="#b9b5ad" stroke-width="2.600" />
                <path d="M764 932l44-26 20 1 28 18.500 77 6 27-8" fill="none" stroke="#fff" stroke-width="1.600" />
                <path d="M249 195l10-6 14-11 12-11 12-11 10-9" fill="none" stroke="#fff" stroke-width="1.200" opacity=".65" />
                <path d="M864 959l5-2 3 1 8 12-6 1-4-1zM887 954h10v3h-10z" fill="#d8efc2" />
                <path d="M520.500 147l3 225 2 126 43 2.500 100 3 80 3 100 2 112 1.500" fill="none" stroke="#c4a3bf" stroke-width="1" stroke-dasharray="3 1.500" />
                <g transform="translate(245 370) scale(.33333)">
                  <path d="M420 432l12 2 10 12h36l16-12 14-8 14-6 16 6v32l8 16-22-4-22 4-14 20-14 8-24 4-10-12-10-14 4-20-14-10Z" fill="#d6edc0" />
                  <path v-for="(s, i) in swamp" :key="i" :d="`M${s[0]} ${s[1]}h${s[2]}`" stroke="#62b0e6" stroke-width="2.600" />
                </g>
                <path d="M956 522.500h4M954 527.500h5M959 533h1" stroke="#7ab9de" />
                <g fill="none" stroke="#e3171a" stroke-width="1.900" stroke-linejoin="round">
                  <path d="M370 496.700l74.300 2 72.400 1.600 9-.6 42.600 2-3.600 158.300H512l-18.700-.7L443 657l-74.700-1" />
                  <path d="M371.700 496.700L368.300 656l-4.600 134.300 79.600 2.700.7 1 67.300-.7 47 2.700h70l75.700 2 62.300 3 1-2.700 19.400-10 .3-121.600-38-2-.3 108h-78l-1.700-9-2.300-7.300-3.400-4.300 4.400-5 .3-4.400-3.700-2 .7-15-14.700-9-1.300-6-18.700.4-.6 86" />
                  <path d="M445 499.300l-2.700 89 .7 36 1 1-1 32 .3 136M516 500.700L512 660l-.7 133.300M704.700 772.300l.3 8-1 18" />
                  <path d="M960 676.300l-30-1.600-71.700-5v135l73.400 2 28.300 1.300M930 674.700l1.200 132" />
                  <path d="M510.600 793.500l-1 145.800 52.200.4 34.400 1 31.700-1.400.5-142.600M560.400 796l.8 143.700" />
                </g>
                <text v-for="l in labels" :key="l[0]" :x="l[1]" :y="l[2] + 4.300" text-anchor="middle" class="maplabel">{{ l[0] }}</text>
              </svg>
            </div>
            <div class="processing">
              <div class="dockhead"><span v-fit="91">Processing Toolbox</span><svg class="dk" width="26" height="10" viewBox="0 0 26 10"><path d="M3 .500h5v4.500H6M3 .500v2M.500 3.500h5v5h-5zM.500 4.500h5M3 1.500h5" fill="none" stroke="#111" stroke-width="1.200" /><path d="M17 1.500l7 7M24 1.500l-7 7" stroke="#111" stroke-width="1.600" /></svg></div>
              <div class="search"><span v-fit="44">Search...</span></div>
              <div class="algos">
                <div v-for="a in algos" :key="a.t" class="arow" :style="{ height: a.h + 'px', paddingLeft: a.pad + 'px' }">
                  <span v-if="a.exp" class="aexp"><svg v-if="a.exp === 'open'" width="7" height="7"><path d="M6 0v6H0Z" fill="#333" /></svg><svg v-else width="6" height="9"><path d="M.500 .500v8L5 4.500Z" fill="#fff" stroke="#999" /></svg></span>
                  <svg v-if="a.icon" class="aic" :class="{ nar: a.icon === 'gdal' || a.icon === 'qgis' }" width="16" height="16" viewBox="0 0 24 24" v-html="icons[a.icon]"></svg>
                  <span v-fit="a.w">{{ a.t }}</span>
                </div>
              </div>
            </div>
          </div>
        </div>
        <div class="edge-right"></div>
      </div>
    </div>
    <div class="gap"></div>
    <div class="chrome">
      <div class="tabs">
        <div class="tab t1">
          <svg width="13" height="16" viewBox="0 0 13 16"><path d="M1 10v5h11v-5" fill="none" stroke="#a9a9a9" stroke-width="1.300" /><path d="M3 13h7M3 10.500l7 .8M4 7.500l6.500 2M6 4l5.500 4M9 1l3 5.500" stroke="#d08a4a" stroke-width="1.500" /></svg>
          <span class="tt"><span v-fit="174">python - qrc file + ui file does no</span></span>
          <svg class="x" width="9" height="9"><path d="M1 1l7 7M8 1L1 8" stroke="#4a5560" stroke-width="1.700" /></svg>
        </div>
        <div class="tab t2">
          <svg width="11" height="14" viewBox="0 0 11 14"><path d="M1 1h5.500L10 4.500V13H1ZM6.500 1v3.500H10" fill="none" stroke="#555" stroke-width="1.400" /></svg>
          <span class="tt"><span v-fit="174">geoportal.roslesinforg.ru:8080/are</span></span>
          <svg class="x" width="9" height="9"><path d="M1 1l7 7M8 1L1 8" stroke="#444" stroke-width="1.600" /></svg>
        </div>
        <div class="plus"><svg width="12" height="12"><path d="M6 0v12M0 6h12" stroke="#444e5a" stroke-width="2" /></svg></div>
      </div>
      <div class="cbody">
        <div class="cedge"></div>
        <div class="ccol">
          <div class="addr">
            <svg class="b1" width="15" height="14" viewBox="0 0 15 14"><path d="M14.500 7H1.500M7.500 .800L1.500 7l6 6.200" fill="none" stroke="#bcbcbc" stroke-width="1.800" /></svg>
            <svg class="b2" width="15" height="14" viewBox="0 0 15 14"><path d="M.500 7h13M7.500 .800l6 6.200-6 6.200" fill="none" stroke="#bcbcbc" stroke-width="1.800" /></svg>
            <svg class="b3" width="16" height="16" viewBox="0 0 16 16"><path d="M13.500 4A6.500 6.500 0 1 0 14.300 9.500" fill="none" stroke="#555" stroke-width="2" /><path d="M15 .500v6.500H8.500Z" fill="#555" /></svg>
            <div class="omni">
              <svg width="14" height="14"><circle cx="7" cy="7" r="6" fill="none" stroke="#555" stroke-width="1.400" /><path d="M7 6v4.500M7 3.300v1.600" stroke="#555" stroke-width="1.500" /></svg>
              <span v-fit="89" class="ns">Не защищено</span><i class="bar"></i>
              <span v-fit="151" class="host">geoportal.roslesinforg.ru</span><span v-fit="145" class="path">:8080/arend_popup.php</span>
            </div>
          </div>
          <div class="page"><div v-for="(p, i) in pageLines" :key="i" class="pl">{{ p }}</div></div>
        </div>
      </div>
    </div>
  </div>
</template>

<style>
html, body { margin: 0; overflow: hidden; }
</style>
<style scoped>
.screen { width: 1899px; height: 1054px; display: flex; overflow: hidden; font: 11px/14px "DejaVu Sans Condensed", "DejaVu Sans", sans-serif; color: #000; background: #fff; white-space: nowrap; }
.screen svg { display: block; flex: none; }
.screen span { flex: none; }
.qgis { width: 1350px; flex: none; display: flex; flex-direction: column; }
.titlebar { height: 23px; flex: none; display: flex; align-items: flex-start; border-bottom: 1px solid #9cc2e6;
  background:
    linear-gradient(90deg, transparent 211px, #4fc4f0 217px, #c9f8ff 224px, #7fe0fb 232px, #c9f8ff 240px, #c4f4ff 250px, #4fc4f0 256px, transparent 263px),
    radial-gradient(ellipse 38px 14px at 172px 13px, #4c49c0 0, transparent 100%),
    linear-gradient(90deg, #6d9bd8 0, #bcd0ec 14px, #a9bedd 24px, #8aa5cc 55px, #a9a9b4 75px, #a7a9b6 98px, #6d86b4 115px, #3c66ae 140px, #1d55a5 190px, #164f9c 270px, #164c98 380px, #1a56a4 600px, #2263b0 790px, #2263b0 900px, #155a9c 1030px, #1b5da8 1150px, #4a86c4 100%); }
.logo { margin: 1px 0 0 5px; }
.title { margin: 2px 0 0 5.5px; font-size: 12px; line-height: 16px; color: #0a1420; }
.winbtns { margin-left: auto; margin-right: 6px; width: 101px; height: 14px; display: flex; flex: none; border: 1px solid #a3c4e4; border-top: 0; border-radius: 0 0 5px 5px; box-shadow: 0 0 0 1px #2b578a; }
.wb { display: flex; justify-content: center; border-right: 1px solid #8fb4da; }
.w1 { width: 27px; } .w2 { width: 26px; } .screen .w3 { flex: 1; border: 0; }
.min { width: 10px; height: 3px; background: #fff; border: 1px solid #445; margin-top: 5px; }
.max { width: 3px; height: 2px; background: #445; border: 3px solid #fff; outline: 1px solid #445; margin-top: 1px; }
.body { flex: 1; display: flex; min-height: 0; }
.edge-left { width: 4px; flex: none; border-right: 1px solid #223d5c; background: linear-gradient(#5a8bc4 0, #2d66b0 50px, #b04858 75px, #c04858 95px, #2860b0 120px, #1c5cb4 180px, #9cc4ec 215px, #2b78d0 260px, #1c60bc 340px, #d0b4a8 420px, #1b66c8 450px, #b4a0b8 505px, #1a60c4 520px, #2180d8 600px, #e0eefa 625px, #4a98a0 640px, #2f80d4 700px, #d05860 722px, #40a0a8 740px, #2f8ee0 800px, #7cb8ec 860px, #2468c0 900px, #1d4c80 940px, #3a80c8 1030px); }
.client { width: 1338px; display: flex; flex-direction: column; background: #f0f0f0; border-top: 1px solid #1d3049; box-sizing: border-box; }
.menubar { height: 18px; flex: none; display: flex; align-items: center; color: #999; background: linear-gradient(#fff 0, #eff2f8 6px, #d5daec 7px, #dfe5f5 100%); border-bottom: 1px solid #b9b9b9; }
.menubar span { position: relative; top: 1px; }
.toolrow { height: 33px; flex: none; display: flex; align-items: stretch; border-bottom: 1px solid #b4b4b4; box-shadow: inset 0 1px #fafafa; }
.group { display: flex; align-items: center; position: relative; padding: 0 2px 0 9px; border-right: 1px solid #b4b4b4; }
.group.last { border-right: 0; }
.group::before { content: ""; position: absolute; left: 3px; top: 4px; bottom: 4px; width: 2px; background: repeating-linear-gradient(#aaa 0 2px, transparent 2px 4px); }
.tool { width: 31px; height: 30px; display: flex; align-items: center; justify-content: center; }
.pressed { box-sizing: border-box; background: #d2d2d2; border: 1px solid #555; border-radius: 3px; height: 28px; box-shadow: inset 0 0 2px #777; }
.arr { width: 12px; display: flex; justify-content: center; }
.arr::before { content: ""; border: 3.5px solid transparent; border-top: 4px solid #222; border-bottom: 0; }
.arr.off::before { border-top-color: #666; }
.user { margin: 5px 7px 0 auto; }
.main { flex: 1; display: flex; min-height: 0; }
.sidebar { width: 47px; flex: none; display: flex; flex-direction: column; }
.hdots { height: 2px; margin: 5px 4px 3px; background: repeating-linear-gradient(90deg, #aaa 0 2px, transparent 2px 4px); flex: none; }
.sideitem { height: 30.1px; flex: none; display: flex; align-items: center; padding-left: 5px; }
.sideitem.inset { padding-left: 11px; }
.sideitem .arr { margin-left: 4px; }
.sidesep { border-top: 1px solid #b4b4b4; box-shadow: 0 1px #fff; height: 1px; flex: none; }
.sideitem.b { padding-left: 11px; height: 29px; }
.layers { width: 192px; flex: none; display: flex; flex-direction: column; }
.dockhead { height: 19px; flex: none; margin-top: 1px; box-sizing: border-box; background: #dadada; border: 1px solid #bababa; display: flex; align-items: center; padding: 1px 0 0 1px; }
.dk { margin-left: auto; margin-right: 2px; }
.laytools { height: 28px; flex: none; display: flex; align-items: center; padding: 1px 0 0 5px; gap: 8px; box-sizing: border-box; }
.laytools .arr { width: 7px; margin: 0 0 0 -1px; }
.more { font-size: 14px; font-weight: 700; margin-left: -2px; margin-top: -2px; }
.tree { flex: 1; background: #fff; border: 1px solid #828790; border-bottom: 0; min-height: 0; overflow: hidden; padding-top: 1px; }
.lrow { height: 18px; display: flex; align-items: center; font-weight: 700; }
.lname { padding-top: 1px; }
.lrow.sub { font-weight: 400; padding-left: 20px; }
.lrow.short { height: 15px; }
.lrow.short .lname { padding-top: 0; }
.exp { width: 15px; padding-left: 8px; display: flex; }
.check { width: 11px; height: 11px; border: 1px solid #8e8f8f; background: linear-gradient(135deg, #d2d6da, #fafafa); box-shadow: inset 0 0 0 1px #f4f4f4; margin-right: 6px; }
.sw { margin-right: 6px; flex: none; }
.sq { width: 16px; height: 16px; box-sizing: border-box; border: 1px solid; }
.sub .sq { width: 18px; height: 18px; }
.mapframe { width: 713px; margin-left: 4px; flex: none; border-left: 1px solid #828790; border-top: 1px solid #828790; border-right: 1px solid #828790; overflow: hidden; box-sizing: border-box; }
.maplabel { font: 11.5px "DejaVu Sans Condensed", sans-serif; fill: #111; }
.processing { flex: 1; margin-left: 4px; display: flex; flex-direction: column; }
.search { height: 19px; flex: none; margin-top: 2px; background: #fff; border: 1px solid #dcdfe4; box-sizing: border-box; display: flex; align-items: center; padding: 1px 0 0 2px; color: #888; font-size: 11.5px; }
.algos { flex: 1; background: #fff; border: 1px solid #828790; border-bottom: 0; }
.arow { display: flex; align-items: center; box-sizing: border-box; }
.aexp { width: 14px; }
.aic { margin-right: 5px; }
.aic.nar { margin-right: 3px; }
.edge-right { width: 7px; flex: none; box-sizing: border-box; border-left: 1px solid #46515c; border-right: 1px solid #58616c; background: linear-gradient(#3f7cba 0, #164e8c 60px, #1c5894 180px, #2a74b4 380px, #3286c4 540px, #579440 548px, #86bc68 590px, #b4c4c4 640px, #c8c8c8 700px, #c8c8c8 790px, #2f94cc 794px, #2f94cc 828px, #ccc 832px, #cfcfcf 900px, #b8c868 960px, #a8b04c 1030px); box-shadow: inset 1px 0 #b4d0e4, inset -1px 0 #90b0c8; }
.gap { width: 3px; flex: none; background: linear-gradient(90deg, #0c1c30, #081420); }
.chrome { flex: 1; display: flex; flex-direction: column; min-width: 0; }
.tabs { height: 46px; flex: none; display: flex; align-items: flex-end; padding-left: 11px; box-sizing: border-box; border-top: 1px solid #b8cee0; border-radius: 5px 0 0 0; background: linear-gradient(90deg, #6d8fb3 0, #5d84ae 90px, #164a80 230px, #1b4c82 330px, #28598f 420px, #1c4f82 100%); }
.tab { height: 34px; display: flex; align-items: center; box-sizing: border-box; border-radius: 8px 8px 0 0; font: 12px "Noto Sans", sans-serif; color: #333; }
.t1 { width: 239px; background: linear-gradient(90deg, #c5cfdd, #b3c0d1); border-radius: 8px 8px 8px 0; padding-left: 14px; color: #616c78; }
.t2 { width: 240px; background: #fff; padding-left: 15px; }
.tt { width: 175px; margin-left: 9px; overflow: hidden; -webkit-mask-image: linear-gradient(90deg, #000 85%, transparent); mask-image: linear-gradient(90deg, #000 85%, transparent); }
.t2 .tt { margin-left: 10px; }
.x { margin-left: 9px; }
.plus { width: 28px; height: 28px; border-radius: 50%; background: #afbdce; display: flex; align-items: center; justify-content: center; margin: 0 0 3px 8px; }
.cbody { flex: 1; display: flex; min-height: 0; }
.cedge { width: 3px; flex: none; background: linear-gradient(#5f86b0 0, #3a6294 150px, #7898bc 260px, #d4e0ec 358px, #376fa6 360px, #28649c 460px, #2c6ca4 525px, #44785c 535px, #88aeb0 600px, #98b8d0 740px, #98b8d0 768px, #3a80b4 772px, #4a90c0 808px, #a8c4d8 812px, #a4c0c8 900px, #84a070 1000px); }
.ccol { flex: 1; background: #fff; min-width: 0; }
.addr { height: 37px; box-sizing: border-box; border-bottom: 1px solid #b0b0b0; display: flex; align-items: center; padding-left: 14px; }
.b2 { margin-left: 17px; } .b3 { margin-left: 17px; }
.omni { margin-left: 14px; flex: 1; height: 28px; border-radius: 14px 0 0 14px; background: #f1f3f4; display: flex; align-items: center; padding-left: 11px; font: 13px "Noto Sans", sans-serif; color: #70757a; overflow: hidden; }
.ns { margin-left: 9px; } .bar { width: 1px; height: 16px; background: #999; margin: 0 9px 0 8px; flex: none; }
.host { color: #222; } .path { color: #80868b; }
.page { padding: 8px; font: 16px/18px "Liberation Serif", serif; }
.pl { height: 18px; }
</style>
